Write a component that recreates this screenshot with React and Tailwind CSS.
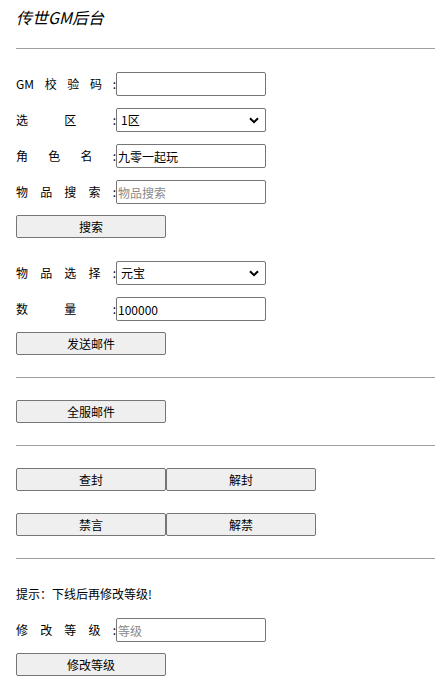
import React from "react";

const font = { fontFamily: '"Noto Sans CJK SC", "Noto Sans", sans-serif' };

function Label({ items }) {
  return (
    <div className="flex w-[100px] shrink-0 justify-between text-[12px] leading-[16px] text-black">
      {items.map((t, i) => (
        <span key={i}>{t}</span>
      ))}
      <span>:</span>
    </div>
  );
}

function TextRow({ items, value, placeholder, className = "" }) {
  return (
    <div className={"flex h-6 items-center " + className}>
      <Label items={items} />
      <input
        className="box-border h-6 w-[150px] rounded-[2px] border border-[#767676] bg-white pl-[1px] text-[12px] text-black outline-none placeholder:text-[#8a8a8a]"
        style={font}
        defaultValue={value}
        placeholder={placeholder}
      />
    </div>
  );
}

function SelectRow({ items, value, className = "" }) {
  return (
    <div className={"flex h-6 items-center " + className}>
      <Label items={items} />
      <div className="relative box-border flex h-6 w-[150px] items-center rounded-[2px] border border-[#767676] bg-white pl-[4px] text-[12px] text-black">
        <span>{value}</span>
        <svg
          className="absolute right-[6px] top-[8px]"
          width="10"
          height="7"
          viewBox="0 0 10 7"
        >
          <path d="M1 1.2 L5 5.2 L9 1.2" fill="none" stroke="#000" strokeWidth="2" />
        </svg>
      </div>
    </div>
  );
}

function Btn({ children }) {
  return (
    <button
      className="box-border flex h-[23px] w-[150px] items-center justify-center rounded-[2px] border border-[#767676] bg-[#efefef] text-[12px] text-black"
      style={font}
    >
      {children}
    </button>
  );
}

function Hr({ className = "" }) {
  return <div className={"h-px bg-[#a0a0a0] " + className} />;
}

export default function App() {
  return (
    <div className="min-h-[688px] bg-white pl-4 text-black" style={font}>
      <div className="pt-[7px] text-[16px] italic leading-[21px]">传世GM后台</div>
      <Hr className="mt-[20px]" />

      <TextRow items={["GM", "校", "验", "码"]} value="" className="mt-[23px]" />
      <SelectRow items={["选", "区"]} value="1区" className="mt-[12px]" />
      <TextRow items={["角", "色", "名"]} value="九零一起玩" className="mt-[12px]" />
      <TextRow items={["物", "品", "搜", "索"]} placeholder="物品搜索" className="mt-[12px]" />
      <div className="mt-[11px]">
        <Btn>搜索</Btn>
      </div>

      <SelectRow items={["物", "品", "选", "择"]} value="元宝" className="mt-[23px]" />
      <TextRow items={["数", "量"]} value="100000" className="mt-[12px]" />
      <div className="mt-[11px]">
        <Btn>发送邮件</Btn>
      </div>

      <Hr className="mt-[22px]" />
      <div className="mt-[22px]">
        <Btn>全服邮件</Btn>
      </div>
      <Hr className="mt-[22px]" />

      <div className="mt-[22px] flex">
        <Btn>查封</Btn>
        <Btn>解封</Btn>
      </div>
      <div className="mt-[22px] flex">
        <Btn>禁言</Btn>
        <Btn>解禁</Btn>
      </div>
      <Hr className="mt-[22px]" />

      <div className="mt-[27px] text-[12px] leading-[16px]">提示：下线后再修改等级!</div>
      <TextRow items={["修", "改", "等", "级"]} placeholder="等级" className="mt-[16px]" />
      <div className="mt-[11px]">
        <Btn>修改等级</Btn>
      </div>
    </div>
  );
}
